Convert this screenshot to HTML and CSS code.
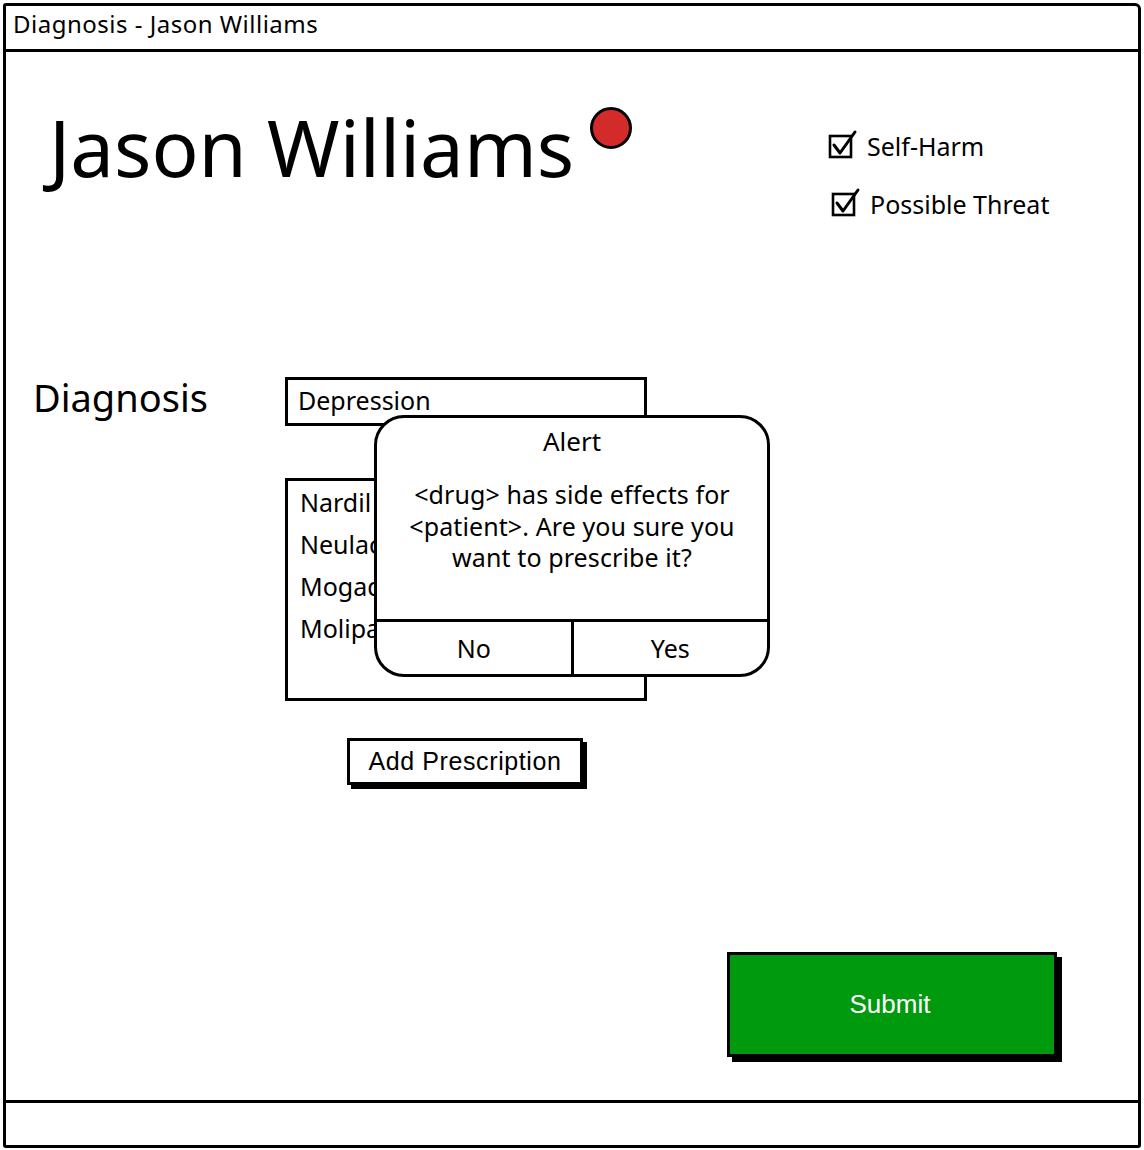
FILE: index.html
```html
<!DOCTYPE html>
<html>
<head>
<meta charset="utf-8">
<link rel="stylesheet" href="styles.css">
<title>Diagnosis - Jason Williams</title>
</head>
<body>
<div class="window">
  <div class="titlebar">Diagnosis - Jason Williams</div>
  <div class="content">
    <div class="header">
      <div class="name-wrap">
        <h1 class="name">Jason Williams</h1>
        <span class="dot"></span>
      </div>
      <div class="flags">
        <div class="flag">
          <svg class="cb" width="30" height="30" viewBox="0 0 30 30"><rect x="2" y="7" width="21" height="21" fill="none" stroke="#000" stroke-width="2.6"/><path d="M6 16 L12 24 L27 3" fill="none" stroke="#000" stroke-width="3" stroke-linecap="round" stroke-linejoin="round"/></svg>
          <span>Self-Harm</span>
        </div>
        <div class="flag flag2">
          <svg class="cb" width="30" height="30" viewBox="0 0 30 30"><rect x="2" y="7" width="21" height="21" fill="none" stroke="#000" stroke-width="2.6"/><path d="M6 16 L12 24 L27 3" fill="none" stroke="#000" stroke-width="3" stroke-linecap="round" stroke-linejoin="round"/></svg>
          <span>Possible Threat</span>
        </div>
      </div>
    </div>

    <div class="diag-row">
      <div class="label">Diagnosis</div>
      <div class="diag-col">
        <div class="input">Depression</div>
        <ul class="listbox">
          <li>Nardil</li>
          <li>Neulactil</li>
          <li>Mogadon</li>
          <li>Molipaxin</li>
        </ul>
        <div class="btn-row"><button class="btn">Add Prescription</button></div>
      </div>
    </div>

    <div class="submit-row"><button class="submit">Submit</button></div>

    <div class="alert">
      <div class="alert-title">Alert</div>
      <div class="alert-body">&lt;drug&gt; has side effects for<br>&lt;patient&gt;. Are you sure you<br>want to prescribe it?</div>
      <div class="alert-actions">
        <div class="alert-btn">No</div>
        <div class="alert-btn">Yes</div>
      </div>
    </div>
  </div>
  <div class="statusbar"></div>
</div>
</body>
</html>
```
FILE: styles.css
```css
* { box-sizing: border-box; }
html, body { margin: 0; padding: 0; background: #fff; }
body { font-family: "Noto Sans", "DejaVu Sans", sans-serif; color: #000; }

.window {
  margin: 3px 0 0 3px;
  width: 1138px;
  height: 1145px;
  border: 3px solid #000;
  border-radius: 3px 6px 3px 3px;
  display: flex;
  flex-direction: column;
}
.titlebar {
  height: 46px;
  border-bottom: 3px solid #000;
  font-size: 24px;
  letter-spacing: 0.5px;
  line-height: 36px;
  padding-left: 7px;
}
.content {
  flex: 1;
  position: relative;
}
.statusbar {
  height: 45px;
  border-top: 3px solid #000;
}

.header {
  display: flex;
  justify-content: space-between;
  padding: 55px 0 0 43px;
  height: 192px;
}
.name-wrap { display: flex; align-items: flex-start; }
.name {
  margin: 0;
  font-weight: 400;
  font-size: 78px;
  line-height: 80px;
  letter-spacing: 0;
}
.dot {
  width: 42px;
  height: 42px;
  border-radius: 50%;
  background: #d32a2a;
  border: 3px solid #000;
  margin: 0 0 0 16px;
}
.flags { width: 310px; padding-top: 24px; }
.flag { display: flex; align-items: center; gap: 9px; font-size: 25px; height: 30px; }
.flag .cb { margin-top: -4px; }
.flag2 { margin: 28px 0 0 3px; }

.diag-row { display: flex; padding-left: 27px; margin-top: 133px; }
.label { width: 252px; font-size: 38px; line-height: 40px; padding-top: 0; }
.diag-col { width: 362px; }
.input {
  height: 49px;
  border: 3px solid #000;
  font-size: 25px;
  padding-left: 10px;
  line-height: 40px;
}
.listbox {
  list-style: none;
  margin: 52px 0 0 0;
  padding: 0 0 0 12px;
  height: 223px;
  border: 3px solid #000;
  font-size: 25px;
  line-height: 42px;
}
.btn-row { padding: 37px 0 0 62px; }
.btn {
  font-family: "Liberation Sans", Arial, sans-serif;
  font-size: 25px;
  letter-spacing: 0.6px;
  height: 47px;
  width: 236px;
  background: #fff;
  border: 3px solid #000;
  box-shadow: 4px 4px 0 #000;
  padding: 0;
  color: #000;
}

.submit-row { display: flex; justify-content: flex-end; padding-right: 81px; margin-top: 167px; }
.submit {
  font-family: "Liberation Sans", Arial, sans-serif;
  font-size: 26px;
  color: #fff;
  background: #009a0f;
  width: 330px;
  height: 105px;
  border: 3px solid #000;
  box-shadow: 5px 5px 0 #000;
  padding: 0 4px 0 0;
}

.alert {
  position: absolute;
  left: 368px;
  top: 363px;
  width: 396px;
  height: 262px;
  background: #fff;
  border: 3px solid #000;
  border-radius: 30px;
  display: flex;
  flex-direction: column;
  overflow: hidden;
}
.alert-title { text-align: center; font-size: 26px; line-height: 30px; padding-top: 8px; }
.alert-body { text-align: center; font-size: 25px; letter-spacing: 0.1px; line-height: 31.5px; padding-top: 23px; flex: 1; }
.alert-actions { display: flex; border-top: 3px solid #000; height: 55px; }
.alert-btn { flex: 1; text-align: center; font-size: 25px; line-height: 52px; }
.alert-btn + .alert-btn { border-left: 3px solid #000; }
```
